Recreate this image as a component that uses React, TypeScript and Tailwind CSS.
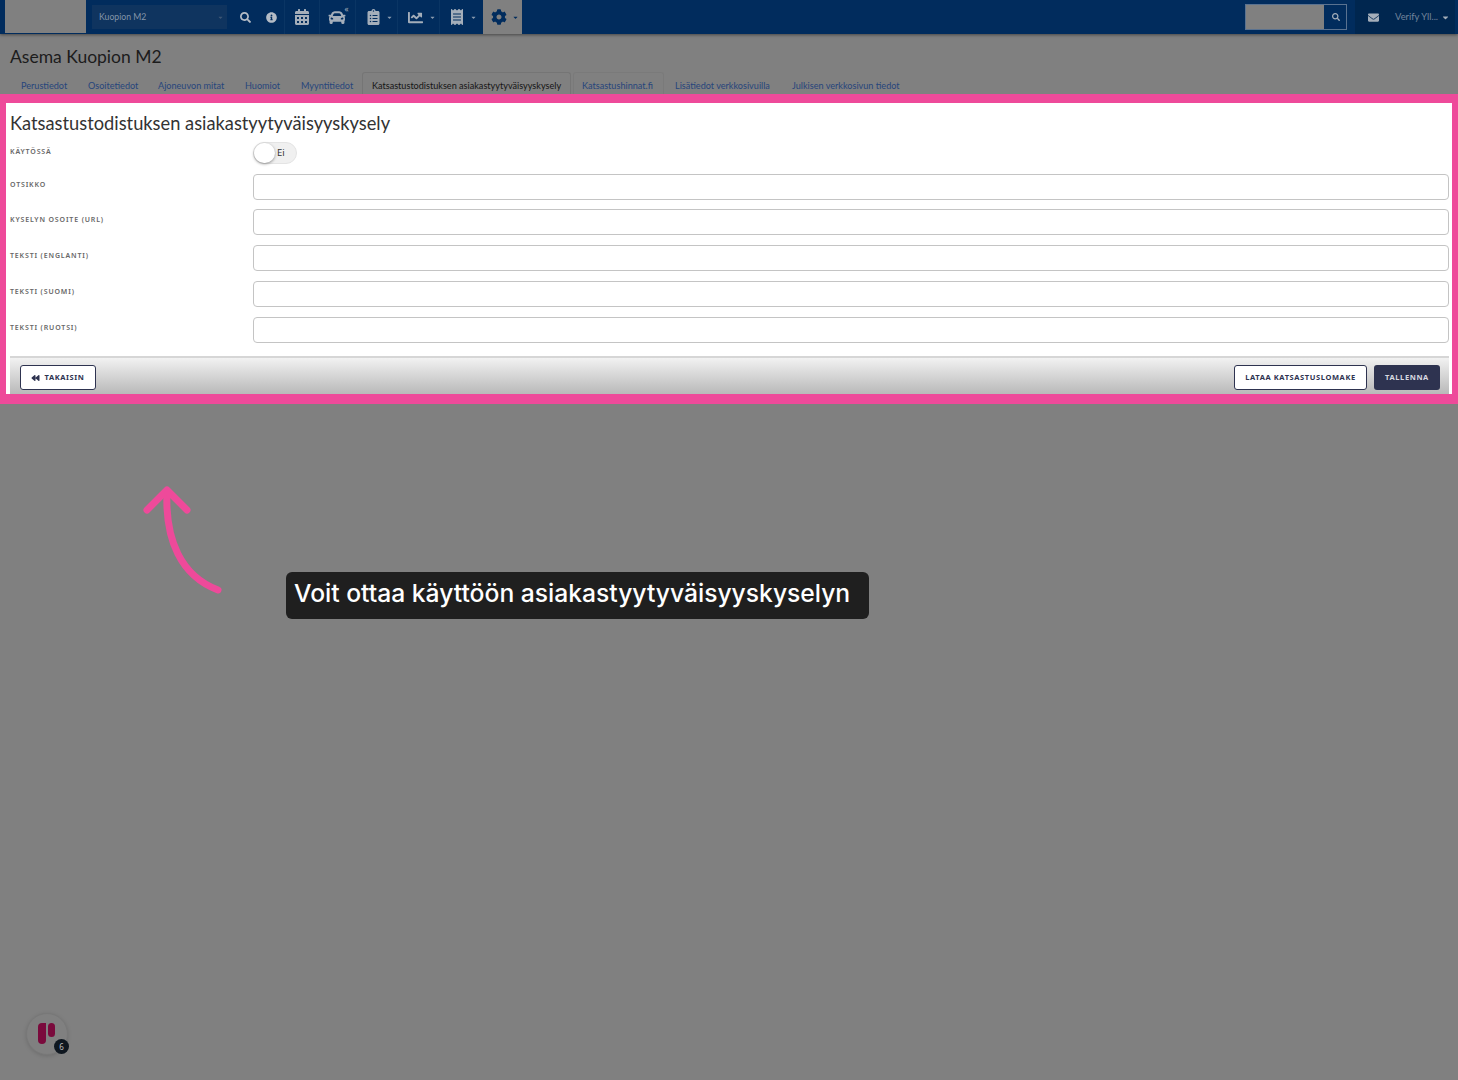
import React from 'react';
import {
  FaBackward,
  FaCalendarAlt,
  FaCar,
  FaCaretDown,
  FaChartLine,
  FaClipboardList,
  FaCog,
  FaEnvelope,
  FaInfoCircle,
  FaReceipt,
  FaSearch,
} from 'react-icons/fa';

const tabs = [
  { label: 'Perustiedot', width: 'w-[67px]' },
  { label: 'Osoitetiedot', width: 'w-[70px]' },
  { label: 'Ajoneuvon mitat', width: 'w-[87px]' },
  { label: 'Huomiot', width: 'w-[56px]' },
  { label: 'Myyntitiedot', width: 'w-[71px]' },
];

const fields = [
  { label: 'Otsikko', rowClass: 'h-[26px]' },
  { label: 'Kyselyn osoite (URL)', rowClass: 'h-[26px] mt-[9px]' },
  { label: 'Teksti (englanti)', rowClass: 'h-[26px] mt-[10px]' },
  { label: 'Teksti (suomi)', rowClass: 'h-[26px] mt-[10px]' },
  { label: 'Teksti (ruotsi)', rowClass: 'h-[26px] mt-[10px]' },
];

function NavCaret() {
  return <FaCaretDown className="w-[7px] h-[7px] text-[#8a9bb0]" />;
}

function TopBar() {
  return (
    <div className="relative z-10 flex h-[34px] bg-[#012c5d] shadow-[0_1px_3px_rgba(0,0,0,0.45)] pl-[5px] pr-[3px]">
      <div className="w-[81px] h-[33px] bg-[#808080]" />
      <div className="ml-[6px] mt-[5px] w-[135px] h-[24px] bg-[#0f345f] flex items-center justify-between pl-[7px] pr-[3px]">
        <span className="text-[8.7px] font-['Lato',sans-serif] text-[#8494a8]">Kuopion M2</span>
        <FaCaretDown className="w-[7px] h-[7px] text-[#3d5675]" />
      </div>
      <div className="flex items-center justify-center w-[36px]">
        <FaSearch className="w-[11px] h-[11px] text-[#b4bcc6]" />
      </div>
      <div className="flex items-center w-[21px] pl-[3px]">
        <FaInfoCircle className="w-[11px] h-[11px] text-[#b4bcc6]" />
      </div>
      <div className="flex items-center justify-center w-[35px] border-l border-[#0a3564]">
        <FaCalendarAlt className="w-[14px] h-[16px] text-[#a4aeba]" />
      </div>
      <div className="flex items-center justify-center w-[36px] border-l border-[#0a3564] pr-[2px]">
        <div className="relative">
          <FaCar className="w-[18px] h-[17px] text-[#a4aeba]" />
          <span className="absolute -top-[4px] -right-[3px] text-[8px] leading-[8px] text-[#a4aeba]">«</span>
        </div>
      </div>
      <div className="flex items-center gap-[6px] w-[42px] pl-[11px] border-l border-[#0a3564]">
        <FaClipboardList className="w-[13px] h-[16px] text-[#a4aeba]" />
        <NavCaret />
      </div>
      <div className="flex items-center gap-[5px] w-[42px] pl-[9px] border-l border-[#0a3564]">
        <FaChartLine className="w-[17px] h-[15px] text-[#a4aeba]" />
        <NavCaret />
      </div>
      <div className="flex items-center gap-[7px] w-[44px] pl-[11px] border-l border-[#0a3564]">
        <FaReceipt className="w-[12px] h-[16px] text-[#a4aeba]" />
        <NavCaret />
      </div>
      <div className="flex items-center gap-[5px] w-[39px] pl-[8px] bg-[#808080]">
        <FaCog className="w-[16px] h-[16px] text-[#012c5d]" />
        <FaCaretDown className="w-[7px] h-[7px] text-[#012c5d]" />
      </div>
      <div className="flex-1" />
      <div className="mt-[4px] flex h-[26px] w-[102px] border border-[#5a7290]">
        <div className="w-[78px] bg-[#808080]" />
        <div className="flex-1 flex items-center justify-center border-l border-[#012c5d]">
          <FaSearch className="w-[8px] h-[8px] text-[#a4aeba]" />
        </div>
      </div>
      <div className="ml-[8px] w-[100px] flex items-center bg-[#00264f] pl-[13px]">
        <FaEnvelope className="w-[11px] h-[11px] text-[#a4aeba]" />
        <span className="ml-[16px] w-[43px] text-[9.4px] font-['Lato',sans-serif] text-[#72849b] whitespace-nowrap">Verify Yll...</span>
        <FaCaretDown className="ml-[3px] w-[9px] h-[9px] text-[#a4aeba]" />
      </div>
    </div>
  );
}

function TabBar() {
  return (
    <div className="flex h-[22px] pl-[11px] items-end text-[9.1px] leading-[12px] font-['Lato',sans-serif]">
      {tabs.map((t) => (
        <div key={t.label} className={`${t.width} h-[20px] pl-[10px] pt-[6px] text-[#27457c] whitespace-nowrap`}>
          {t.label}
        </div>
      ))}
      <div className="w-[209px] h-[22px] pl-[9px] pt-[7px] text-[#151515] border border-b-0 border-[#757575] rounded-t-[3px] whitespace-nowrap">
        Katsastustodistuksen asiakastyytyväisyyskysely
      </div>
      <div className="ml-[2px] w-[91px] h-[22px] pl-[8px] pt-[7px] text-[#27457c] border border-b-0 border-[#7a7a7a] rounded-t-[3px] whitespace-nowrap">
        Katsastushinnat.fi
      </div>
      <div className="w-[118px] h-[20px] pl-[11px] pt-[6px] text-[#27457c] whitespace-nowrap">Lisätiedot verkkosivuilla</div>
      <div className="h-[20px] pl-[10px] pt-[6px] text-[#27457c] whitespace-nowrap">Julkisen verkkosivun tiedot</div>
    </div>
  );
}

function SurveyForm() {
  return (
    <div className="h-[310px] border-x-[6px] border-t-[9px] border-b-[10px] border-[#ee4a9a] bg-white pl-[4px] pr-[3px]">
      <h2 className="h-[39px] pt-[6px] text-[18.3px] leading-[28px] text-[#333333] font-['Lato',sans-serif]">
        Katsastustodistuksen asiakastyytyväisyyskysely
      </h2>
      <div className="flex h-[22px]">
        <label className="w-[243px] text-[7px] leading-[10px] tracking-[0.85px] uppercase font-semibold text-[#666666] pt-[5px]">
          Käytössä
        </label>
        <div className="relative w-[44px] h-[22px] rounded-full bg-[#f0f0f0] border border-[#e4e4e4] flex items-center pl-[23px] text-[9.5px] text-[#333333]">
          Ei
          <span className="absolute left-0 top-0 w-[21px] h-[20px] rounded-full bg-white shadow-[0_1px_3px_rgba(0,0,0,0.4)]" />
        </div>
      </div>
      <div className="mt-[10px]">
        {fields.map((f) => (
          <div key={f.label} className={`flex ${f.rowClass}`}>
            <label className="w-[243px] text-[7px] leading-[10px] tracking-[0.85px] uppercase font-semibold text-[#666666] pt-[6px]">
              {f.label}
            </label>
            <input className="flex-1 h-[26px] rounded-[4px] border border-[#c4c4c4] bg-white" />
          </div>
        ))}
      </div>
      <div className="mt-[13px] h-[38px] border-t-[2px] border-[#d6d6d6] bg-linear-to-b from-[#f2f2f2] to-[#b9b9b9] flex items-start justify-between pt-[7px] pl-[10px] pr-[9px]">
        <button className="flex items-center justify-center gap-[4px] w-[76px] h-[25px] rounded-[3px] border border-[#2e3350] bg-white text-[7.5px] font-bold tracking-[0.6px] text-[#2e3350]">
          <FaBackward className="w-[9px] h-[8px]" />
          TAKAISIN
        </button>
        <div className="flex gap-[7px]">
          <button className="w-[133px] h-[25px] rounded-[3px] border border-[#2e3350] bg-white text-[7.5px] font-bold tracking-[0.6px] text-[#2e3350]">
            LATAA KATSASTUSLOMAKE
          </button>
          <button className="w-[66px] h-[25px] rounded-[3px] bg-[#2e3350] text-[7.5px] font-bold tracking-[0.6px] text-[#d8d9e0]">
            TALLENNA
          </button>
        </div>
      </div>
    </div>
  );
}

export default function App() {
  return (
    <div className="relative h-[1080px] overflow-hidden bg-[#808080] font-['Noto_Sans','Open_Sans',sans-serif]">
      <TopBar />
      <h1 className="h-[38px] pl-[10px] pt-[9px] text-[17.5px] leading-[28px] text-[#1c1c1c] font-['Lato',sans-serif]">Asema Kuopion M2</h1>
      <TabBar />
      <SurveyForm />

      {/* arrow pointing up at the form */}
      <svg className="absolute left-[135px] top-[478px] w-[95px] h-[125px]" viewBox="0 0 95 125" fill="none">
        <path
          d="M32 14 C30 62 46 98 83 112"
          stroke="#ee4a9a"
          strokeWidth="7"
          strokeLinecap="round"
        />
        <path
          d="M12 32 L32 12 L52 32"
          stroke="#ee4a9a"
          strokeWidth="7"
          strokeLinecap="round"
          strokeLinejoin="round"
        />
      </svg>

      <div className="absolute left-[286px] top-[572px] w-[583px] h-[47px] rounded-[6px] bg-[#1f1f1f] pl-[8px] pb-[5px] flex items-center text-[24.65px] font-medium text-white font-['Inter',sans-serif] whitespace-nowrap">
        Voit ottaa käyttöön asiakastyytyväisyyskyselyn
      </div>

      {/* launcher badge */}
      <div className="absolute left-[26px] top-[1013px] w-[42px] h-[42px] rounded-full bg-[#808080] border border-[#787878] shadow-[0_1px_4px_rgba(0,0,0,0.15)]">
        <svg className="absolute left-[11px] top-[8px] w-[18px] h-[22px]" viewBox="0 0 18 22">
          <path d="M0 5a4 4 0 0 1 4-4h4v17a4 4 0 0 1-8 0z" fill="#7a0a3c" />
          <rect x="10" y="1" width="7" height="14" rx="3.5" fill="#7a0a3c" />
        </svg>
        <span className="absolute left-[27px] top-[25px] w-[15px] h-[15px] rounded-full bg-[#0f1720] text-[8px] leading-[15px] text-center text-[#bbbbbb]">
          6
        </span>
      </div>
    </div>
  );
}
